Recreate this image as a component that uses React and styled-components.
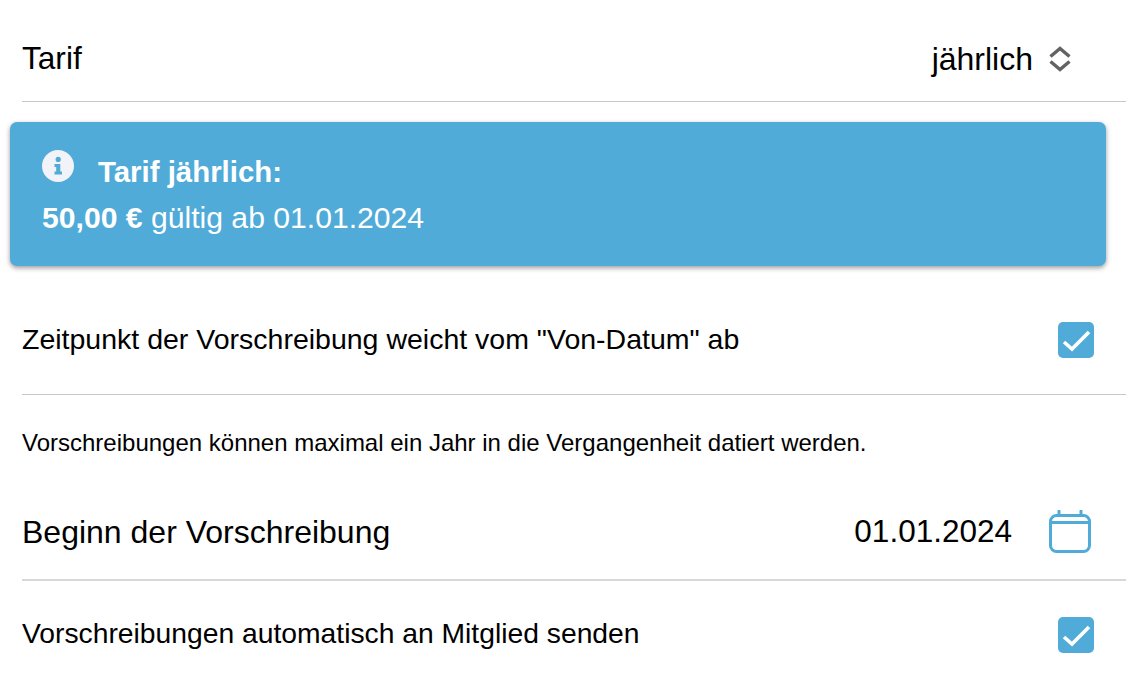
import React from 'react';
import styled, { createGlobalStyle } from 'styled-components';

const GlobalStyle = createGlobalStyle`
  html, body {
    margin: 0;
    padding: 0;
    background: #fff;
    font-family: "Liberation Sans", Arial, sans-serif;
    color: #000;
    overflow: hidden;
  }
`;

const Page = styled.div`
  width: 1130px;
  height: 678px;
  overflow: hidden;
`;

const Row = styled.div`
  height: ${(p) => p.$height}px;
  margin-left: 22px;
  margin-right: 4px;
  padding-top: ${(p) => p.$pt || 0}px;
  padding-right: ${(p) => p.$pr || 32}px;
  box-sizing: border-box;
  display: flex;
  align-items: center;
  justify-content: space-between;
  border-bottom: ${(p) => (p.$line ? p.$line : 'none')};
`;

const Label = styled.div`
  font-size: ${(p) => p.$size}px;
  line-height: 1.2;
  white-space: nowrap;
  margin-bottom: ${(p) => p.$mb || 0}px;
`;

const Value = styled.div`
  display: flex;
  align-items: center;
  gap: ${(p) => p.$gap}px;
  font-size: ${(p) => p.$size}px;
  line-height: 1.2;
`;

const Banner = styled.div`
  margin: 20px 24px 0 10px;
  height: 144px;
  box-sizing: border-box;
  padding: 30px 32px 0;
  background: #50abd8;
  color: #fff;
  border-radius: 7px;
  box-shadow: 0 2px 5px rgba(0, 0, 0, 0.4);
`;

const BannerTitle = styled.div`
  display: flex;
  align-items: flex-start;
  gap: 24px;
  font-size: 29.4px;
  line-height: 40px;
  font-weight: 700;
`;

const InfoIcon = styled.svg`
  width: 32px;
  height: 32px;
  flex: none;
  margin-top: -2px;
`;

const BannerText = styled.div`
  font-size: 30.15px;
  line-height: 34px;
  margin-top: 9px;
  white-space: nowrap;

  b {
    font-weight: 700;
  }
`;

const Check = styled.div`
  width: 36px;
  height: 36px;
  border-radius: 5px;
  background: #50abd8;
  display: flex;
  align-items: center;
  justify-content: center;
`;

const Note = styled.div`
  margin: 34px 0 0 22px;
  font-size: 24px;
  line-height: 28px;
  white-space: nowrap;
`;

const Tick = () => (
  <Check>
    <svg width="36" height="36" viewBox="0 0 36 36" fill="none">
      <path d="M6 20 L14 27 L31 10" stroke="#fff" strokeWidth="3.6" />
    </svg>
  </Check>
);

const App = () => (
  <Page>
    <GlobalStyle />
    <Row $height={102} $pt={17} $line="1px solid #c8c8c8" $pr={54}>
      <Label $size={31.6}>Tarif</Label>
      <Value $gap={15} $size={32}>
        jährlich
        <svg width="24" height="26" viewBox="0 0 24 26" fill="none" stroke="#636363" strokeWidth="3.4">
          <path d="M2.5 10.5 L12 2.5 L21.5 10.5" />
          <path d="M2.5 15.5 L12 23.5 L21.5 15.5" />
        </svg>
      </Value>
    </Row>
    <Banner>
      <BannerTitle>
        <InfoIcon viewBox="0 0 32 32">
          <circle cx="16" cy="16" r="16" fill="#f1f3f8" />
          <circle cx="16.2" cy="9.4" r="2.6" fill="#50abd8" />
          <path d="M12.5 14 H18.3 V21.6 H20 V24.6 H12.5 V21.6 H14.2 V17 H12.5 Z" fill="#50abd8" />
        </InfoIcon>
        Tarif jährlich:
      </BannerTitle>
      <BannerText>
        <b>50,00 €</b> gültig ab 01.01.2024
      </BannerText>
    </Banner>
    <Row $height={129} $pt={20} $line="1px solid #c8c8c8">
      <Label $size={28.5} $mb={2}>Zeitpunkt der Vorschreibung weicht vom "Von-Datum" ab</Label>
      <Tick />
    </Row>
    <Note>Vorschreibungen können maximal ein Jahr in die Vergangenheit datiert werden.</Note>
    <Row $height={124} $pt={28} $line="2px solid #d8d8d8" $pr={35}>
      <Label $size={32}>Beginn der Vorschreibung</Label>
      <Value $gap={37} $size={31.5}>
        01.01.2024
        <svg width="42" height="44" viewBox="0 0 42 44" fill="none" stroke="#50abd8">
          <rect x="1.5" y="5.5" width="39" height="36" rx="6" strokeWidth="3" />
          <path d="M2 12.5 H40" strokeWidth="3" />
          <path d="M10 1 V5 M32 1 V5" strokeWidth="3" strokeLinecap="round" />
        </svg>
      </Value>
    </Row>
    <Row $height={96} $pt={12}>
      <Label $size={28.27} $mb={2}>Vorschreibungen automatisch an Mitglied senden</Label>
      <Tick />
    </Row>
  </Page>
);

export default App;
